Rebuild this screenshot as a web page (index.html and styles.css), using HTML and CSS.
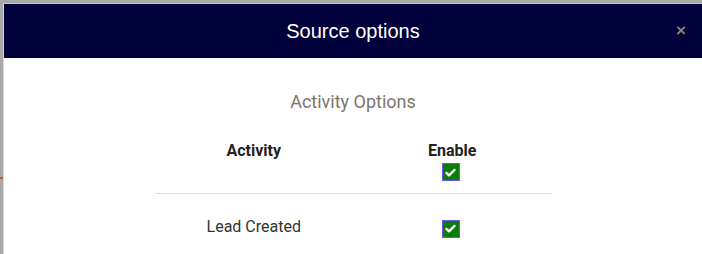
FILE: index.html
```html
<!DOCTYPE html>
<html lang="en">
<head>
    <meta charset="UTF-8">
    <title>Source options</title>
    <link rel="stylesheet" href="styles.css">
</head>
<body>
    <div class="behind-line"></div>
    <div class="modal">
        <div class="modal-header">
            <div class="modal-title">Source options</div>
            <span class="close">&times;</span>
        </div>
        <div class="modal-body">
            <div class="section-title">Activity Options</div>
            <table class="options">
                <thead>
                    <tr>
                        <th>Activity</th>
                        <th>
                            <div>Enable</div>
                            <span class="check">
                                <svg viewBox="0 0 16 16" width="13" height="13"><path d="M3 8.5l3.2 3L13 4.8" fill="none" stroke="#fff" stroke-width="2.8" stroke-linecap="round" stroke-linejoin="round"/></svg>
                            </span>
                        </th>
                    </tr>
                </thead>
                <tbody>
                    <tr>
                        <td>Lead Created</td>
                        <td>
                            <span class="check">
                                <svg viewBox="0 0 16 16" width="13" height="13"><path d="M3 8.5l3.2 3L13 4.8" fill="none" stroke="#fff" stroke-width="2.8" stroke-linecap="round" stroke-linejoin="round"/></svg>
                            </span>
                        </td>
                    </tr>
                </tbody>
            </table>
        </div>
    </div>
</body>
</html>
```

FILE: styles.css
```css
body, html {
    margin: 0;
    padding: 0;
    height: 100%;
    overflow: hidden;
    background: #a9a9a9;
    font-family: 'Roboto', 'Liberation Sans', sans-serif;
}

/* bit of the page showing through the backdrop */
.behind-line {
    position: absolute;
    top: 177px;
    left: 0;
    width: 3px;
    height: 2px;
    background: #c0583a;
}

.modal {
    position: relative;
    margin: 3px 0 0 3px;
    height: 100%;
    background: #fff;
    border-left: 1px solid #d6d6d6;
    border-top: 1px solid #c8c8c8;
}

.modal-header {
    position: relative;
    height: 54px;
    background: #00003a;
    display: flex;
    justify-content: center;
    align-items: center;
}

.modal-title {
    font-family: 'Liberation Sans', Arial, sans-serif;
    font-size: 20px;
    color: #fff;
}

.close {
    position: absolute;
    right: 16px;
    top: 17px;
    font-family: 'Liberation Sans', Arial, sans-serif;
    font-size: 17px;
    font-weight: bold;
    line-height: 20px;
    color: #85857f;
}

.modal-body {
    display: flex;
    flex-direction: column;
    align-items: center;
    padding-top: 32px;
}

.section-title {
    font-size: 18px;
    line-height: 24px;
    color: #7c7669;
}

.options {
    width: 397px;
    margin-top: 27px;
    border-collapse: collapse;
    font-size: 16px;
}

.options th {
    width: 50%;
    font-weight: bold;
    color: #222;
    line-height: 20px;
    vertical-align: top;
    padding: 0 0 9px;
    border-bottom: 1px solid #dedede;
}

.options td {
    width: 50%;
    text-align: center;
    color: #333;
    line-height: 20px;
    padding: 23px 0 21px;
    vertical-align: top;
}

.check {
    display: inline-flex;
    justify-content: center;
    align-items: center;
    width: 16px;
    height: 16px;
    margin: 2px 0 0 -3px;
    background: #0a7d0a;
    border: 1px solid #6f52f0;
}

.options td .check {
    margin-top: 3px;
}
```
